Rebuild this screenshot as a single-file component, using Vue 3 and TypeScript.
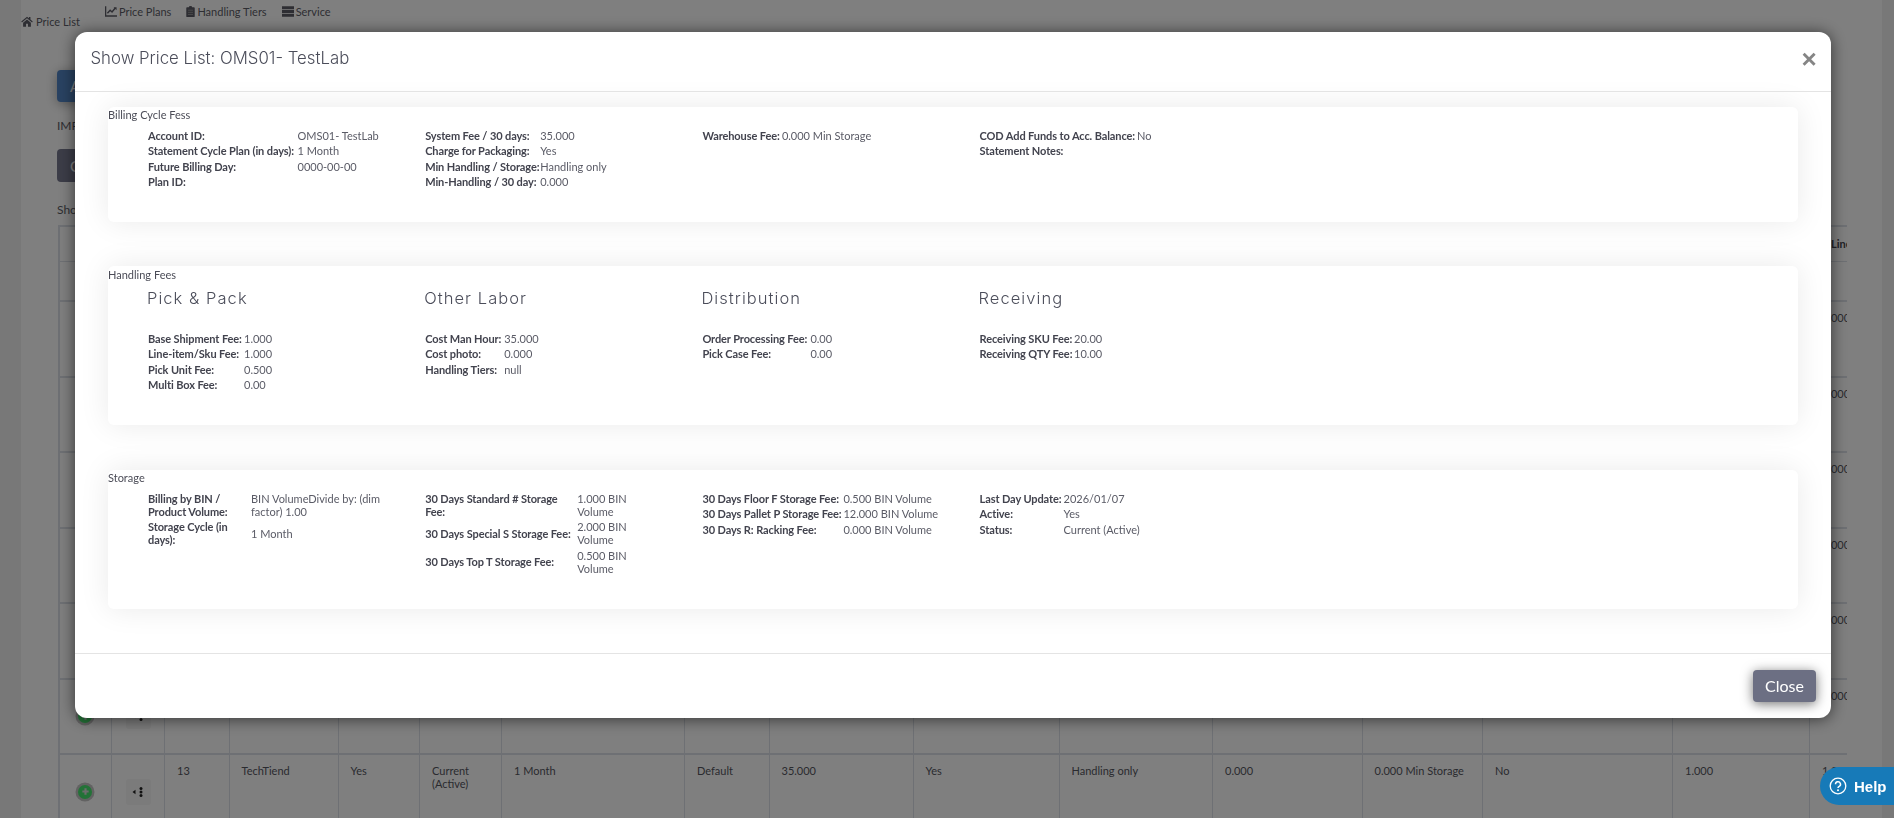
<script setup lang="ts">
interface Row { label: string; value?: string }
interface Block { title?: string; labelWidth: number; valueWidth?: number; rows: Row[] }
interface Section { name: string; cls: string; blocks: Block[] }

const sections: Section[] = [
  {
    name: 'Billing Cycle Fess',
    cls: 'billing',
    blocks: [
      { labelWidth: 149.5, rows: [
        { label: 'Account ID:', value: 'OMS01- TestLab' },
        { label: 'Statement Cycle Plan (in days):', value: '1 Month' },
        { label: 'Future Billing Day:', value: '0000-00-00' },
        { label: 'Plan ID:', value: '' }
      ] },
      { labelWidth: 115, rows: [
        { label: 'System Fee / 30 days:', value: '35.000' },
        { label: 'Charge for Packaging:', value: 'Yes' },
        { label: 'Min Handling / Storage:', value: 'Handling only' },
        { label: 'Min-Handling / 30 day:', value: '0.000' }
      ] },
      { labelWidth: 79.5, rows: [{ label: 'Warehouse Fee:', value: '0.000 Min Storage' }] },
      { labelWidth: 157.5, rows: [
        { label: 'COD Add Funds to Acc. Balance:', value: 'No' },
        { label: 'Statement Notes:', value: '' }
      ] }
    ]
  },
  {
    name: 'Handling Fees',
    cls: 'handling',
    blocks: [
      { title: 'Pick & Pack', labelWidth: 96, rows: [
        { label: 'Base Shipment Fee:', value: '1.000' },
        { label: 'Line-item/Sku Fee:', value: '1.000' },
        { label: 'Pick Unit Fee:', value: '0.500' },
        { label: 'Multi Box Fee:', value: '0.00' }
      ] },
      { title: 'Other Labor', labelWidth: 79, rows: [
        { label: 'Cost Man Hour:', value: '35.000' },
        { label: 'Cost photo:', value: '0.000' },
        { label: 'Handling Tiers:', value: 'null' }
      ] },
      { title: 'Distribution', labelWidth: 108, rows: [
        { label: 'Order Processing Fee:', value: '0.00' },
        { label: 'Pick Case Fee:', value: '0.00' }
      ] },
      { title: 'Receiving', labelWidth: 94.5, rows: [
        { label: 'Receiving SKU Fee:', value: '20.00' },
        { label: 'Receiving QTY Fee:', value: '10.00' }
      ] }
    ]
  },
  {
    name: 'Storage',
    cls: 'storage',
    blocks: [
      { labelWidth: 103, valueWidth: 140, rows: [
        { label: 'Billing by BIN / Product Volume:', value: 'BIN VolumeDivide by: (dim factor) 1.00' },
        { label: 'Storage Cycle (in days):', value: '1 Month' }
      ] },
      { labelWidth: 152, valueWidth: 66, rows: [
        { label: '30 Days Standard # Storage Fee:', value: '1.000 BIN Volume' },
        { label: '30 Days Special S Storage Fee:', value: '2.000 BIN Volume' },
        { label: '30 Days Top T Storage Fee:', value: '0.500 BIN Volume' }
      ] },
      { labelWidth: 141, rows: [
        { label: '30 Days Floor F Storage Fee:', value: '0.500 BIN Volume' },
        { label: '30 Days Pallet P Storage Fee:', value: '12.000 BIN Volume' },
        { label: '30 Days R: Racking Fee:', value: '0.000 BIN Volume' }
      ] },
      { labelWidth: 84, rows: [
        { label: 'Last Day Update:', value: '2026/01/07' },
        { label: 'Active:', value: 'Yes' },
        { label: 'Status:', value: 'Current (Active)' }
      ] }
    ]
  }
]

const colWidths: number[] = [53, 53, 64.5, 109, 81.5, 82, 183, 84.5, 144, 146, 153.5, 149.5, 120.5, 190, 137, 120]
const cells: string[] = ['13', 'TechTiend', 'Yes', 'Current (Active)', '1 Month', 'Default', '35.000', 'Yes', 'Handling only', '0.000', '0.000 Min Storage', 'No', '1.000', '1.000']
const headers: string[] = ['ID', 'Account', 'Active', 'Status', 'Cycle', 'Plan', 'System Fee', 'Packaging', 'Min Handling', 'Min Fee', 'Warehouse Fee', 'COD', 'Base Fee', '1 Line']
const rowCount = 8
</script>

<template>
  <div class="page">
    <aside class="edge"></aside>
    <main class="content">
      <header class="topbar">
        <a class="crumb">
          <svg class="ico home" viewBox="0 0 16 14"><path d="M8 0.5 0.3 7l1 1.2L8 2.6l6.7 5.6 1-1.2L12.6 4.400V1h-2v1.700ZM2.800 8.700V14h3.900V10h2.600v4h3.900V8.700L8 4.300Z" /></svg>
          Price List
        </a>
        <nav class="tabs">
          <a class="tab">
            <svg class="ico" viewBox="0 0 14 12"><path d="M0 0h1.500v10.500H14V12H0Z" /><path d="M2.800 8 6 4.600l2.200 1.900L12 2" fill="none" stroke="currentColor" stroke-width="1.700" /><path d="M10 1h3.500v3.500Z" /></svg>
            Price Plans
          </a>
          <a class="tab">
            <svg class="ico clip" viewBox="0 0 10 13"><path d="M3 1.500a2 1.500 0 0 1 4 0h2a1 1 0 0 1 1 1V12a1 1 0 0 1-1 1H1a1 1 0 0 1-1-1V2.500a1 1 0 0 1 1-1Z" /><path d="M2 5h6M2 7.500h6M2 10h6" stroke="#9a9a9a" stroke-width="1" /></svg>
            Handling Tiers
          </a>
          <a class="tab">
            <svg class="ico" viewBox="0 0 14 12"><path d="M0 0h14v3.400H0ZM0 4.300h14v3.400H0ZM0 8.600h14V12H0Z" /></svg>
            Service
          </a>
        </nav>
      </header>

      <button class="bg-btn blue" type="button">Add</button>
      <p class="bg-text import">IMPORT</p>
      <button class="bg-btn dark" type="button">Copy</button>
      <p class="bg-text show">Show</p>

      <div class="table-wrap">
        <table class="grid">
          <colgroup>
            <col v-for="(w, i) in colWidths" :key="i" :style="{ width: w + 'px' }" />
          </colgroup>
          <thead>
            <tr class="head-a">
              <th></th><th></th>
              <th v-for="h in headers" :key="h">{{ h }}</th>
            </tr>
            <tr class="head-b">
              <td v-for="(w, i) in colWidths" :key="i"></td>
            </tr>
          </thead>
          <tbody>
            <tr v-for="r in rowCount" :key="r" class="data">
              <td class="mid">
                <span class="plus"><svg viewBox="0 0 10 10"><path d="M5 1.500v7M1.500 5h7" stroke="#d8d8d8" stroke-width="2.400" /></svg></span>
              </td>
              <td class="mid">
                <span class="act">
                  <svg viewBox="0 0 12 12" width="12" height="12"><path d="M0.500 6 3.500 3.800v4.400Z" fill="#222" /><circle cx="9" cy="2.500" r="1.500" fill="#222" /><circle cx="9" cy="6" r="1.500" fill="#222" /><circle cx="9" cy="9.500" r="1.500" fill="#222" /></svg>
                </span>
              </td>
              <td v-for="(c, i) in cells" :key="i">{{ c }}</td>
            </tr>
          </tbody>
        </table>
      </div>
    </main>
    <aside class="edge right"></aside>

    <div class="backdrop"></div>

    <section class="modal">
      <header class="modal-head">
        <h4 class="modal-title">Show Price List: OMS01- TestLab</h4>
        <button class="x" type="button" aria-label="Close">×</button>
      </header>
      <div class="modal-body">
        <article v-for="s in sections" :key="s.name" class="card" :class="s.cls">
          <div class="card-label">{{ s.name }}</div>
          <div class="cols">
            <div v-for="(b, bi) in s.blocks" :key="bi" class="col">
              <h5 v-if="b.title" class="col-title">{{ b.title }}</h5>
              <div
                class="kv"
                :class="{ wrap: b.valueWidth }"
                :style="{ gridTemplateColumns: b.labelWidth + 'px ' + (b.valueWidth ? b.valueWidth + 'px' : '1fr') }"
              >
                <template v-for="(r, ri) in b.rows" :key="ri">
                  <b class="k">{{ r.label }}</b>
                  <span class="v">{{ r.value }}</span>
                </template>
              </div>
            </div>
          </div>
        </article>
      </div>
      <footer class="modal-foot">
        <button class="close-btn" type="button">Close</button>
      </footer>
    </section>

    <button class="help" type="button">
      <svg viewBox="0 0 18 18" width="18" height="18">
        <circle cx="9" cy="9" r="7.800" fill="none" stroke="#fff" stroke-width="1.300" />
        <path d="M6.500 7.200a2.500 2.400 0 1 1 3.700 2.100c-.8.500-1.200.9-1.200 1.800" fill="none" stroke="#fff" stroke-width="1.500" />
        <circle cx="9" cy="13.200" r="1" fill="#fff" />
      </svg>
      Help
    </button>
  </div>
</template>

<style>
html, body { margin: 0; padding: 0; overflow: hidden; }
</style>

<style scoped>
.page {
  display: flex;
  width: 1894px;
  height: 818px;
  overflow: hidden;
  background: #fff;
  font-family: Lato, "Liberation Sans", sans-serif;
  font-size: 11px;
  color: #5a5b66;
}
.edge { width: 21px; flex: none; background: #f0f0f0; }
.edge.right { width: 12px; }
.content { flex: 1; min-width: 0; position: relative; padding: 0; }

.topbar { display: flex; height: 70px; }
.crumb { display: flex; align-items: center; gap: 3px; height: 14px; margin-top: 14px; color: #5c5c66; font-size: 11px; }
.tabs { display: flex; gap: 15px; margin-left: 25px; margin-top: 4px; height: 14px; }
.tab { display: flex; align-items: center; gap: 2px; color: #5c5c66; font-size: 11px; }
.ico { width: 12px; height: 11px; fill: currentColor; flex: none; }
.ico.clip { width: 9px; height: 11px; }
.ico.home { width: 12px; height: 11px; }

.bg-btn {
  display: block;
  margin: 0 0 0 36px;
  width: 110px;
  height: 33px;
  border: 0;
  border-radius: 4px;
  color: #fff;
  text-align: left;
  padding-left: 13px;
  font: 15px Lato, sans-serif;
}
.blue { background: #5285c4; box-shadow: 0 2px 12px rgba(0, 0, 0, 0.35); height: 32px; }
.dark { background: #787a90; }
.bg-text { margin: 0 0 0 36px; font-size: 12px; line-height: 14px; color: #5c5c66; }
.import { padding: 17px 0 16px; }
.show { padding: 21px 0 8px; }

.table-wrap { width: 1789.500px; margin-left: 36.500px; overflow: hidden; }
.grid { table-layout: fixed; width: 1871px; border-collapse: collapse; border-left: 2px solid #dde1e8; }
.grid th, .grid td { border: 1px solid #dde1e8; padding: 9px 12px; text-align: left; vertical-align: top; font-weight: 400; line-height: 13.200px; overflow: hidden; white-space: normal; }
.grid th { font-weight: 700; color: #44454f; }
.head-a { height: 35px; }
.head-a th { border-top: 2px solid #dde1e8; vertical-align: middle; }
.head-b { height: 40px; }
.data { height: 75.500px; }
.data td { border-top: 2px solid #dde1e8; color: #555660; }
.data td:nth-child(1), .data td:nth-child(2) { padding-left: 0; padding-right: 0; }
.grid td.mid { vertical-align: middle; text-align: center; }
.plus { display: inline-flex; width: 14px; height: 14px; border-radius: 50%; align-items: center; justify-content: center; background: #46e56e; box-shadow: 0 0 0 2.500px #c4c4c4; }
.plus svg { width: 9px; height: 9px; }
.act { display: inline-flex; width: 25px; height: 26px; align-items: center; justify-content: center; background: #f6f6f6; border-radius: 3px; }

.backdrop { position: fixed; inset: 0; background: rgba(0, 0, 0, 0.5); }

.modal {
  position: fixed;
  left: 75px;
  top: 32px;
  width: 1756px;
  height: 686px;
  display: flex;
  flex-direction: column;
  background: #fff;
  border-radius: 12px;
  box-shadow: 0 1px 16px rgba(0, 0, 0, 0.6);
}
.modal-head { position: relative; height: 59px; flex: none; border-bottom: 1px solid #e4e4e4; box-sizing: content-box; }
.modal-title { margin: 0; position: absolute; left: 15.500px; top: 14px; font-family: Inter, Lato, sans-serif; font-weight: 300; font-size: 16.800px; line-height: 24px; color: #4b4d5a; }
.x { position: absolute; right: 14px; top: 13px; width: 16px; height: 28px; padding: 0; border: 0; background: none; font: 700 26px/28px "Liberation Sans", sans-serif; color: #858585; }
.modal-body { flex: 1; display: flex; flex-direction: column; gap: 44.500px; padding: 15px 33px 0; }
.card { border-radius: 6px; background: #fff; padding: 1.400px 0 0; box-shadow: 0 0 30px rgba(0, 0, 0, 0.085); }
.billing { height: 113.600px; }
.handling { height: 157.600px; }
.storage { height: 137.600px; }
.card-label { line-height: 13.200px; color: #4b4c57; }
.cols { display: grid; grid-template-columns: repeat(4, 277.200px); padding: 7px 0 0 40px; }
.col { width: 247px; }
.col-title { margin: -1px 0 22.800px -1px; font-family: Inter, Lato, sans-serif; font-weight: 300; font-size: 16.500px; line-height: 22px; letter-spacing: 1.050px; color: #4b4d5a; }
.kv { display: grid; align-items: center; row-gap: 2.300px; line-height: 13.200px; white-space: nowrap; }
.kv.wrap { white-space: normal; row-gap: 2.100px; }
.k { font-weight: 700; color: #42434e; letter-spacing: -0.1px; }
.v { color: #5a5b66; min-height: 13.200px; }
.modal-foot { flex: none; height: 64px; border-top: 1px solid #e4e4e4; display: flex; justify-content: flex-end; align-items: center; padding-right: 15px; }
.close-btn { width: 63px; height: 32px; border: 0; border-radius: 4px; padding: 0 0 2px; background: #6c6f83; color: #fff; font: 16px Lato, sans-serif; box-shadow: 0 2px 12px rgba(0, 0, 0, 0.55); }

.help {
  position: fixed;
  right: 0;
  top: 767px;
  width: 74px;
  height: 38px;
  padding: 0 0 0 9px;
  display: flex;
  align-items: center;
  gap: 7px;
  border: 0;
  border-radius: 19px 0 0 19px;
  background: #177ab8;
  color: #fff;
  font: 700 15px "Liberation Sans", sans-serif;
}
</style>
